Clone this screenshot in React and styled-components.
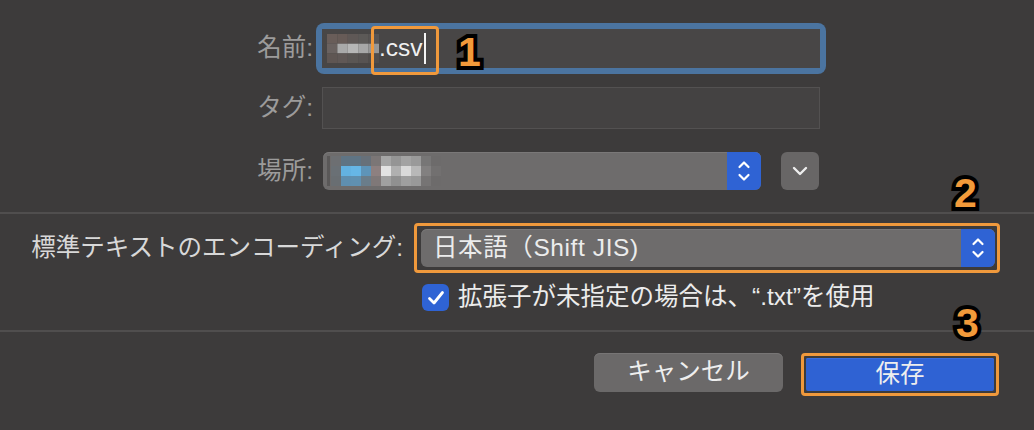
import React from 'react';
import styled, { createGlobalStyle } from 'styled-components';

const GlobalStyle = createGlobalStyle`
  html, body {
    margin: 0;
    padding: 0;
    background: #3d3b3b;
  }
  body {
    font-family: "Liberation Sans", "Noto Sans CJK JP", sans-serif;
  }
`;

const Sheet = styled.div`
  position: relative;
  width: 1034px;
  height: 430px;
  background: #3d3b3b;
  overflow: hidden;
  color: #e6e6e6;
  font-size: 24.5px;
  line-height: 1;
`;

const TopSection = styled.div`
  height: 214px;
  box-sizing: border-box;
  padding-top: 23px;
  border-bottom: 2px solid #504e4e;
`;

const Row = styled.div`
  display: flex;
  align-items: center;
  margin-top: ${p => p.$mt || 0}px;
`;

const Label = styled.div`
  width: 313px;
  text-align: right;
  color: #9c9b9b;
`;

const NameRing = styled.div`
  position: relative;
  margin-left: 3px;
  width: 510px;
  height: 51px;
  box-sizing: border-box;
  padding: 6px;
  border-radius: 8px;
  background: #4b74a0;
`;

const NameInput = styled.div`
  display: flex;
  align-items: center;
  height: 100%;
  padding-left: 5px;
  background: #484646;
  color: #f0f0f0;
`;

const Cursor = styled.span`
  display: inline-block;
  width: 2px;
  height: 31px;
  margin-left: 1px;
  background: #f4f4f4;
`;

const TextField = styled.div`
  margin-left: 9px;
  width: 498px;
  height: 42px;
  box-sizing: border-box;
  border: 1px solid #535151;
  background: #444242;
`;

const Popup = styled.div`
  display: flex;
  align-items: center;
  margin-left: ${p => p.$ml || 0}px;
  width: ${p => p.$w}px;
  height: 38px;
  border-radius: 6px;
  overflow: hidden;
  background: #6e6c6c;
  box-shadow: inset 0 1px 0 #7a7878;
`;

const PopupText = styled.div`
  flex: 1;
  display: flex;
  align-items: center;
  padding-left: ${p => p.$pl || 12}px;
  color: #ececec;
  letter-spacing: ${p => p.$ls || 0}px;
`;

const StepperBox = styled.div`
  width: 34px;
  height: 100%;
  background: #2f63d4;
  display: flex;
  align-items: center;
  justify-content: center;
`;

const SquareButton = styled.div`
  margin-left: 20px;
  width: 38px;
  height: 38px;
  border-radius: 6px;
  background: #686666;
  display: flex;
  align-items: center;
  justify-content: center;
`;

const MiddleSection = styled.div`
  height: 118px;
  box-sizing: border-box;
  padding-top: 9px;
  border-bottom: 2px solid #504e4e;
  display: grid;
  grid-template-columns: 414px 1fr;
  align-content: start;
  row-gap: 11px;
  align-items: center;
`;

const EncodingLabel = styled.div`
  justify-self: end;
  padding-right: 11px;
  color: #d8d8d8;
`;

const Highlight = styled.div`
  width: ${p => p.$w}px;
  box-sizing: border-box;
  border: 3px solid #f0993c;
  border-radius: 4px;
  padding: ${p => p.$pad};
`;

const CheckRow = styled.div`
  grid-column: 2;
  display: flex;
  align-items: center;
  margin-left: 8px;
  color: #ececec;
`;

const CheckBox = styled.div`
  width: 27px;
  height: 27px;
  border-radius: 6px;
  background: #2f63d4;
  margin-right: 9px;
  display: flex;
  align-items: center;
  justify-content: center;
`;

const BottomSection = styled.div`
  display: flex;
  justify-content: flex-end;
  align-items: flex-start;
  gap: 18px;
  padding: 21px 35px 0 0;
`;

const Button = styled.div`
  width: ${p => p.$w}px;
  height: ${p => p.$h}px;
  border-radius: ${p => p.$primary ? 2 : 6}px;
  background: ${p => p.$primary ? '#2f62d3' : '#6b6969'};
  box-shadow: inset 0 1px 0 ${p => p.$primary ? '#3a6ee0' : '#777575'};
  color: #eeeeee;
  display: flex;
  align-items: center;
  justify-content: center;
`;

const Marker = styled.div`
  position: absolute;
  left: ${p => p.$x}px;
  top: ${p => p.$y}px;
  font-family: "Liberation Sans", "DejaVu Sans", sans-serif;
  font-weight: 700;
  font-size: 41px;
  line-height: 1;
  color: #f29a3a;
  -webkit-text-stroke: 8px #000;
  paint-order: stroke fill;
`;

const NameMark = styled.div`
  position: absolute;
  left: 55px;
  top: 3px;
  width: 68px;
  height: 49px;
  box-sizing: border-box;
  border: 3px solid #f0993c;
  border-radius: 4px;
`;

const nameMosaic = [
  ['#695d59', '#675b57', '#5f5856', '#5c5957', '#575454'],
  ['#6a6260', '#a9a9a9', '#b6b6b6', '#a7a7a7', '#979797'],
  ['#5f5653', '#605856', '#5a5654', '#575352', '#504d4c'],
];

const placeMosaic = [
  ['#6d6f72', '#5f7484', '#5f7484', '#677079', '#7b7676', '#a5a5a5', '#959595', '#a3a3a3', '#9a9a9a', '#777676', '#6d6b6b'],
  ['#6a7075', '#63b2e2', '#66b6e6', '#5e94b8', '#8d8080', '#e2e2e2', '#b0b0b0', '#dadada', '#b8b8b8', '#828080', '#727070'],
  ['#696e72', '#5f8fb0', '#6090b0', '#6a7d8a', '#7f7878', '#a0a0a0', '#909090', '#9f9f9f', '#999999', '#767474', '#6d6b6b'],
];

function Mosaic({ cells, cw, ch }) {
  return (
    <svg width={cells[0].length * cw} height={cells.length * ch} style={{ display: 'block', flexShrink: 0 }}>
      {cells.map((row, r) =>
        row.map((c, i) => <rect key={r + '-' + i} x={i * cw} y={r * ch} width={cw} height={ch} fill={c} />)
      )}
    </svg>
  );
}

function Stepper() {
  return (
    <StepperBox>
      <svg width="14" height="24" viewBox="0 0 14 24">
        <path d="M2.5 8 L7 3.5 L11.5 8" fill="none" stroke="#fff" strokeWidth="2.2" strokeLinecap="round" strokeLinejoin="round" />
        <path d="M2.5 16 L7 20.5 L11.5 16" fill="none" stroke="#fff" strokeWidth="2.2" strokeLinecap="round" strokeLinejoin="round" />
      </svg>
    </StepperBox>
  );
}

export default function App() {
  return (
    <Sheet>
      <GlobalStyle />
      <TopSection>
        <Row>
          <Label>名前:</Label>
          <NameRing>
            <NameInput>
              <Mosaic cells={nameMosaic} cw={10.4} ch={9.7} />
              <span>.csv</span>
              <Cursor />
            </NameInput>
            <NameMark />
          </NameRing>
        </Row>
        <Row $mt={13}>
          <Label>タグ:</Label>
          <TextField />
        </Row>
        <Row $mt={23}>
          <Label>場所:</Label>
          <Popup $ml={10} $w={438}>
            <PopupText $pl={4}>
              <div style={{ width: 3, height: 30, background: '#5a5858', marginRight: 1 }} />
              <Mosaic cells={placeMosaic} cw={10} ch={10} />
            </PopupText>
            <Stepper />
          </Popup>
          <SquareButton>
            <svg width="16" height="10" viewBox="0 0 16 10">
              <path d="M2 2 L8 8 L14 2" fill="none" stroke="#ededed" strokeWidth="2.4" strokeLinecap="round" strokeLinejoin="round" />
            </svg>
          </SquareButton>
        </Row>
      </TopSection>

      <MiddleSection>
        <EncodingLabel>標準テキストのエンコーディング:</EncodingLabel>
        <Highlight $w={586} $pad="3px 2px 3px 4px">
          <Popup $w={574}>
            <PopupText $pl={12} $ls={0.6}>日本語（Shift JIS)</PopupText>
            <Stepper />
          </Popup>
        </Highlight>
        <CheckRow>
          <CheckBox>
            <svg width="18" height="16" viewBox="0 0 18 16">
              <path d="M2.5 8.5 L7 13 L15.5 2.5" fill="none" stroke="#fff" strokeWidth="2.8" strokeLinecap="round" strokeLinejoin="round" />
            </svg>
          </CheckBox>
          拡張子が未指定の場合は、“.txt”を使用
        </CheckRow>
      </MiddleSection>

      <BottomSection>
        <Button $w={189} $h={39}>キャンセル</Button>
        <Highlight $w={198} $pad="2px">
          <Button $primary $w={188} $h={33}>保存</Button>
        </Highlight>
      </BottomSection>

      <Marker $x={458} $y={32}>1</Marker>
      <Marker $x={954} $y={173}>2</Marker>
      <Marker $x={956} $y={303}>3</Marker>
    </Sheet>
  );
}
